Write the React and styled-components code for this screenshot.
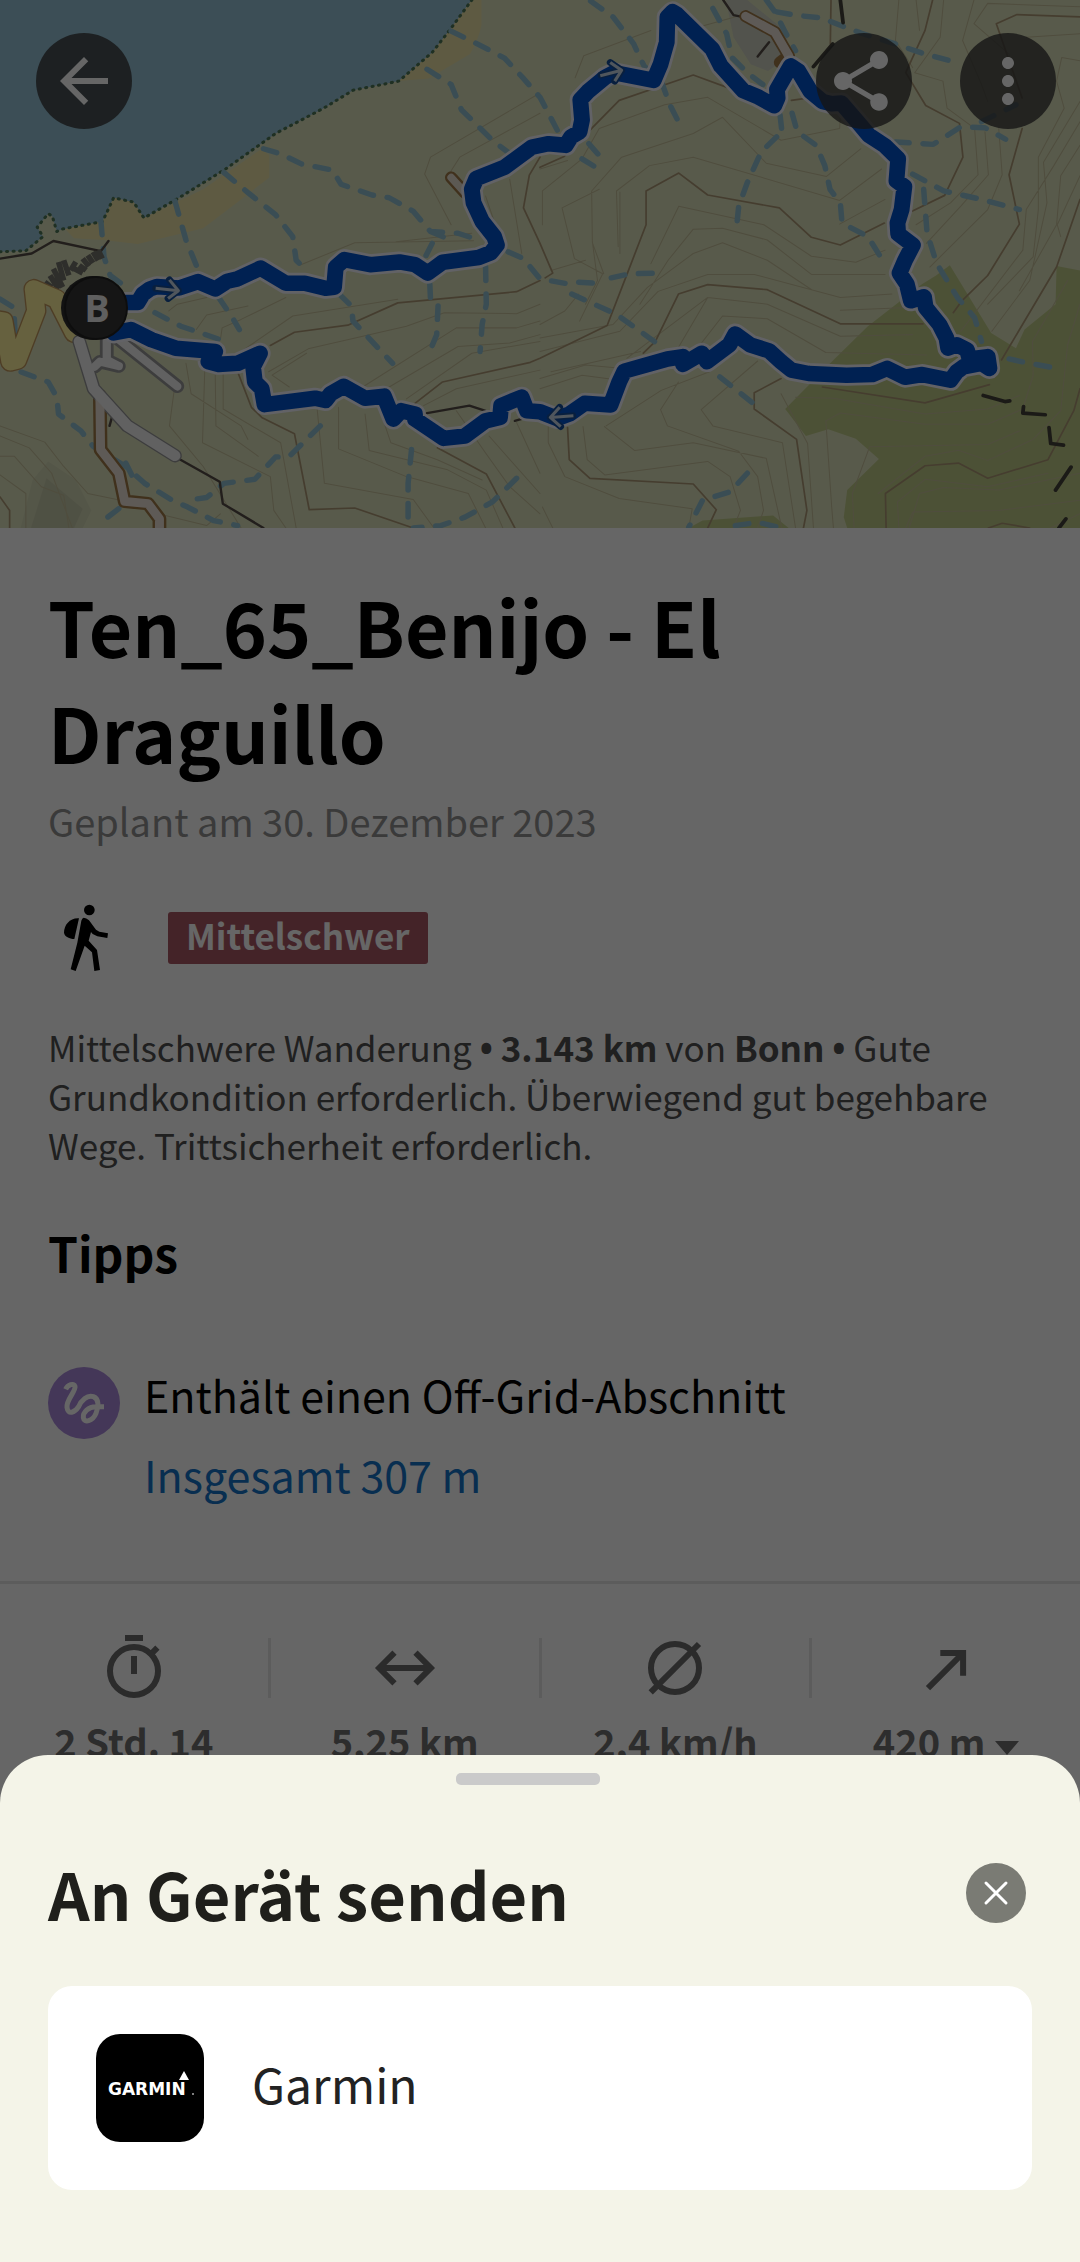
import { MdArrowBack, MdMoreVert, MdShare } from "react-icons/md";
import styled, { createGlobalStyle } from "styled-components";

export default function App() {
  return (
    <>
      <GlobalStyle />
      <Page>
        <Hero>
          <TourMap />
          <TopBar>
            <RoundButton aria-label="Zurück">
              <MdArrowBack />
            </RoundButton>
            <TopActions>
              <RoundButton aria-label="Teilen">
                <MdShare viewBox="1 0 24 24" />
              </RoundButton>
              <RoundButton aria-label="Mehr">
                <MdMoreVert />
              </RoundButton>
            </TopActions>
          </TopBar>
        </Hero>

        <Content>
          <Title>Ten_65_Benijo - El Draguillo</Title>
          <Planned>Geplant am 30. Dezember 2023</Planned>
          <Grade>
            <HikerIcon />
            <Badge>Mittelschwer</Badge>
          </Grade>
          <Description>
            Mittelschwere Wanderung <Bullet>•</Bullet> <b>3.143 km</b> von{" "}
            <b>Bonn</b> <Bullet>•</Bullet> Gute Grundkondition erforderlich.
            Überwiegend gut begehbare Wege. Trittsicherheit erforderlich.
          </Description>
          <Subtitle>Tipps</Subtitle>
          <Tip>
            <OffGridIcon />
            <TipText>
              <span>Enthält einen Off-Grid-Abschnitt</span>
              <TipLink href="#offgrid">Insgesamt 307 m</TipLink>
            </TipText>
          </Tip>
        </Content>

        <Stats>
          <Stat>
            <StatIcon viewBox="0 0 24 24">
              <path d="M9 2h6M12 8v6M17.4 7.6l2.4-2.4" />
              <circle cx="12" cy="13" r="8" />
            </StatIcon>
            <StatValue>2 Std. 14</StatValue>
          </Stat>
          <Divider />
          <Stat>
            <StatIcon viewBox="0 0 24 24">
              <path d="M8.5 6.9L3.4 12l5.1 5.1M15.5 6.9l5.1 5.1-5.1 5.1M3.4 12h17.2" />
            </StatIcon>
            <StatValue>5,25 km</StatValue>
          </Stat>
          <Divider />
          <Stat>
            <StatIcon viewBox="0 0 24 24">
              <path d="M3.9 20.1L20 4" />
              <circle cx="12" cy="12" r="8" />
            </StatIcon>
            <StatValue>2,4 km/h</StatValue>
          </Stat>
          <Divider />
          <Stat>
            <StatIcon viewBox="0 0 24 24">
              <path d="M10.1 7h7.6v7.6M17.7 7L6 18.7" />
            </StatIcon>
            <StatValue>
              420 m
              <Caret viewBox="0 0 24 14">
                <path d="M0 0h24L12 14z" />
              </Caret>
            </StatValue>
          </Stat>
        </Stats>
      </Page>

      <Backdrop />

      <Sheet role="dialog" aria-labelledby="sheet-title">
        <HandleRow>
          <Handle />
        </HandleRow>
        <SheetHeader>
          <SheetTitle id="sheet-title">An Gerät senden</SheetTitle>
          <CloseButton aria-label="Schließen">
            <svg viewBox="0 0 60 60">
              <path d="M20 20l20 20M40 20L20 40" />
            </svg>
          </CloseButton>
        </SheetHeader>
        <Device>
          <GarminLogo />
          <DeviceName>Garmin</DeviceName>
        </Device>
      </Sheet>
    </>
  );
}

function HikerIcon() {
  return (
    <Hiker viewBox="24 36 216 216">
      <circle cx="148" cy="60" r="16" />
      <path d="M117 85C90 83 72 105 72 128C74 140 88 146 103 147Z" />
      <path d="M131 83Q139 83 147 91L168 119L178 125L204 130L202 144L172 139L158 132L153 126L146 152L171 180L180 240L163 243L156 187L134 167L107 243L92 238L112 158L124 92Q126 84 131 83Z" />
    </Hiker>
  );
}

function OffGridIcon() {
  return (
    <TipIcon viewBox="54 51 216 216">
      <circle cx="162" cy="159" r="108" fill="#aa8adc" />
      <path
        d="M107 118C113 104 132 98 135 109C138 124 108 150 111 172C114 196 134 188 146 170C154 150 172 134 190 140C208 147 206 170 198 190C188 214 162 220 160 203C158 186 176 170 197 170H222"
        fill="none"
        stroke="#fff"
        strokeWidth="15"
      />
    </TipIcon>
  );
}

function GarminLogo() {
  return (
    <Logo viewBox="0 0 108 108">
      <rect width="108" height="108" rx="24" />
      <path d="M88 37l5 9H83z" fill="#fff" />
      <text x="12" y="61" fill="#fff">
        GARMIN
      </text>
      <circle cx="97" cy="60" r="1" fill="#aaa" />
    </Logo>
  );
}

const route =
  "M300 915L365 895L400 895L415 870L435 855L455 848L520 852L575 833L625 855L660 832L690 825L757 793L830 838L885 838L945 853L970 850L975 790L1000 768L1075 783L1160 775L1205 783L1242 808L1285 776L1390 762L1425 748L1443 725L1435 700L1400 655L1375 600L1370 560L1383 528L1465 495L1545 435L1593 425L1643 430L1658 405L1683 390L1690 355L1685 295L1708 270L1758 228L1783 215L1898 238L1918 190L1936 125L1938 50L1953 35L1965 42L2068 145L2093 195L2158 268L2198 285L2248 313L2258 290L2256 265L2296 195L2318 210L2353 270L2388 300L2415 307L2443 305L2498 370L2523 400L2568 430L2608 470L2603 535L2626 552L2618 620L2606 660L2608 692L2651 725L2628 770L2612 808L2633 840L2645 890L2683 878L2688 910L2728 960L2748 1000L2753 1030L2778 1020L2808 1035L2815 1062L2868 1055L2873 1090L2850 1075L2798 1085L2778 1100L2760 1125L2678 1108L2628 1116L2576 1090L2533 1108L2458 1110L2348 1105L2298 1095L2268 1070L2233 1038L2178 1020L2135 988L2118 1020L2053 1070L2038 1045L1983 1078L1983 1055L1938 1062L1813 1098L1798 1130L1773 1198L1698 1193L1653 1225L1618 1238L1568 1218L1530 1215L1515 1175L1455 1200L1452 1235L1410 1245L1350 1290L1288 1297L1205 1240L1205 1225L1165 1215L1142 1240L1115 1172L1060 1178L998 1143L960 1165L945 1185L915 1178L768 1197L760 1150L740 1130L735 1085L755 1045L690 1075L635 1078L605 1070L625 1040L510 1030L440 1005L380 975L330 985";

const streams = [
  "M1310 92L1390 132L1465 172L1520 232L1568 288L1590 330L1618 385",
  "M1240 205L1310 250L1340 325L1430 415L1500 470",
  "M765 440L815 455L875 485L965 503L990 545L1080 577L1130 585L1200 625L1250 685L1330 690L1375 705",
  "M650 510L720 570L800 635L850 700L860 770L890 800",
  "M508 595L540 710L572 790",
  "M293 655L302 760L320 815L380 860",
  "M450 925L525 965L640 1005",
  "M635 880L675 940L695 975",
  "M985 870L1020 905L1025 950L1080 1010L1140 1075",
  "M1255 720L1235 760M1248 840L1250 885M1272 905L1268 990L1252 1030",
  "M1410 790L1412 900L1400 960L1394 1040",
  "M1250 685L1320 715M1475 745L1520 765L1568 825L1650 840L1680 835L1730 838",
  "M1660 870L1790 930L1920 1025",
  "M1775 822L1830 810L1905 808",
  "M0 885L40 910L45 1010L60 1100L140 1130L165 1175L170 1225L235 1275L270 1320L365 1380L420 1430L500 1480L545 1500L620 1540L690 1555",
  "M930 1260L840 1350L800 1352L740 1418L650 1430L600 1472L545 1480",
  "M1195 1330L1185 1430L1185 1562",
  "M1500 1415L1430 1485L1350 1530L1280 1555L1200 1562",
  "M345 1505L300 1540M365 1370L385 1410",
  "M1715 3L1780 50L1840 130L1870 195L1920 240L1945 310L1975 370",
  "M2070 25L2110 100L2125 170L2170 215L2215 250",
  "M2225 0L2250 35L2280 95L2310 150",
  "M2255 35L2310 45L2385 53L2440 75L2500 98L2600 130L2680 158L2760 180",
  "M2300 335L2315 390L2370 430L2395 490L2410 560L2440 600L2445 660L2520 700L2560 765",
  "M2255 405L2210 450L2170 540L2145 610L2138 680",
  "M2265 340L2270 385M1710 425L1740 460M1690 470L1730 495",
  "M2600 420L2710 427L2790 375L2860 378L2920 412M2850 360L2950 310",
  "M2650 515L2740 565L2850 590L2960 620",
  "M2682 560L2692 690L2720 780L2780 880L2830 940L2850 1010",
  "M2930 1062L2990 1075L3060 1088",
  "M2090 1115L2140 1155L2195 1200",
  "M2170 1400L2120 1455L2040 1480L2000 1560M2135 1555L2200 1545L2260 1560",
];

const boldContours =
  "M785 1022L855 983L1010 962L1155 896L1500 863L1568 830M692 1105L730 1205L760 1235L855 1283L898 1508L1030 1503L1200 1562M1190 1205L1285 1130L1540 1072L1568 1060L1763 963L1823 805L1876 665V565L1971 512L2055 577L2263 615L2356 702L2440 725L2568 660M1270 1325L1412 1402L1495 1562M1568 495L1638 463L1718 380L1798 297L2013 222L2115 260M2298 297L2360 288M1568 465L1537 518L1520 615L1568 720L1605 808L1583 822M2708 0L2686 90L2630 215L2688 312L2786 365L2796 465L2743 578L2648 625M3136 50L2953 43L2893 70L2968 290M2968 380L2930 517L2960 663L2868 815L2793 890L2768 925M1868 1045L1903 1010L1970 870L2055 842L2228 857L2440 958H2680M3136 590L3068 790L2908 1065M1648 1265L1653 1360L1713 1415L2013 1432L2080 1508L2055 1562M2268 1120L2190 1162V1210L2313 1300L2343 1510L2333 1562M2388 1145L2686 1192L2873 1138M2573 1562L2571 1460L2686 1378L2783 1370L2868 1415L3043 1360L3118 1215L3136 1150M0 1470L28 1510V1562M2413 0L2411 130M2870 1562L2910 1548L2990 1562";

const thinContours =
  "M490 920L515 900L600 880M570 975L600 932L720 905M640 1005L645 970L700 945L830 880M700 1040L850 935L1155 885M780 1100L895 1032L1180 965L1290 925L1500 928L1568 900M840 1145L790 1110L890 1045M1045 1150L1325 970H1500L1568 950M1130 1145L1330 1025L1480 1015L1568 990M1180 1180L1370 1045L1568 1010M1230 1200L1325 1150L1568 1095M540 1075L555 1165L700 1260L720 1300M505 1160L492 1260L590 1380L700 1562M595 1080L588 1310L785 1410L795 1510L830 1562M648 1100V1210L815 1310L860 1562M625 1110L627 1260L750 1350M920 1200L942 1430L1200 1478L1260 1562M983 1205V1328L1180 1410L1360 1460L1410 1562M1060 1225L1072 1333L1300 1390L1412 1450L1460 1562M1110 1235L1135 1310L1270 1360L1400 1420M1325 1215L1410 1340L1480 1440L1568 1520M1500 1250L1568 1400M1420 1290L1568 1460M0 1260L130 1308L185 1380L255 1460L350 1480M0 1290L85 1325L150 1400L210 1562M0 1350H42L120 1440L185 1465L200 1562M0 1405L75 1460V1562M480 1525L600 1555L640 1520M1375 712L1030 718L870 785M1310 665L1233 515L1250 465L1568 275M1310 505L1335 465L1568 335M1410 580L1450 700M1480 530L1515 750M1370 690L1150 715M1605 1562L1575 1500M1670 230L1695 165L1890 90M1940 70L2040 77L2170 40M1568 500L1648 475M1575 665V565L1690 470L1740 380L1930 310L2055 288L2268 415L2438 380L2440 345M1600 800L1700 770M1700 900L1735 830L1720 715L1718 565L1805 465L2013 395L2098 347L2225 483L2400 522L2500 440M1683 950L1750 810L1668 765L1632 615L1740 560M1753 810L1720 718M1790 565L1886 490L2013 465L2438 593L2560 500M1568 960L1640 920L1680 870M1795 730L1790 565M1800 750V568M1890 780L1971 610L2218 665L2356 758L2485 776L2570 740M1858 900L1940 770L2013 678L2098 675L2228 710L2356 812H2570M1568 1000L1780 960L1880 850L2013 750L2098 718L2228 770L2358 858M1568 1040L1800 980L1911 862L2055 812H2190L2440 880L2590 870M1820 1060L2055 880L2228 900L2440 995L2650 990M1960 1045L2055 880M2010 1050L2098 935L2228 943L2398 1043L2690 1050M1600 1100L1860 1040M1568 1120L1700 1080L1810 1090M1568 1150L1690 1110L1800 1125M2440 918L2640 910M2438 663L2570 590M1592 1262V1310L1640 1410L1798 1475L2010 1505L2000 1562M1693 1262L1705 1360L1756 1405L2055 1365L2120 1410L2150 1510L2130 1562M1755 1262L1843 1333L2013 1310L2225 1356L2270 1562M2200 1068L2036 1212L2070 1260L2272 1310L2310 1562M1760 1260L1920 1155L2060 1100M1918 1212L1938 1260L2145 1335L2200 1410L2217 1510L2200 1562M1970 1130L1918 1212M2268 1165L2345 1312L2362 1562M2310 1175L2420 1178L2686 1225L2868 1210L2960 1170M2420 1562L2415 1500L2398 1245L2440 1222L2686 1255H2868L2970 1210L3000 1110L2998 1010L3100 830M2480 1562L2475 1460L2525 1322L2868 1315L2960 1275M2610 1562L2606 1485L2686 1418L2868 1440L3043 1400M2640 1562L2670 1460L2740 1442L2900 1450L3136 1400M2550 1460L2686 1350L2783 1332L2868 1362L3000 1300L3080 1215L3100 1020L3136 900M2630 1562L2650 1515L2900 1510L3136 1480M3050 1562L3136 1520M2610 0L2600 120L2650 200M2660 0L2670 90M2740 0L2730 110L2656 215L2738 240L2750 320L2830 380L2840 517L2760 600L2660 665M2828 0L2795 120L2850 250L2868 300M3136 20L2868 10L2828 70L2930 160L2940 250M3136 100L2980 110M3136 180L3083 170L3068 240L3090 320L3015 465V620L3000 760L2868 900M2900 380L2910 517L2868 620L2700 790M2860 390L2870 517L2790 610L2690 720M3136 300L3030 480L3040 600L2990 830L2880 980M3136 360L3060 490L2980 620L2970 740L2790 980M3136 430L3080 520L3068 665L2960 860M3136 520L3070 665L3080 700";

// the terrain is drawn on a finer grid and scaled down to the map's own units
function TourMap() {
  return (
    <MapSvg viewBox="0 0 1080 528" preserveAspectRatio="xMidYMid slice">
      <rect width="1080" height="528" fill="#dce1bc" />
      <g
        transform="scale(0.34439 0.33801)"
        fill="none"
        strokeLinecap="round"
        strokeLinejoin="round"
      >
        <g stroke="none">
          <path
            d="M0 0H1370L1305 90L1255 155L1158 240L1025 267L940 320L800 395L655 500L520 585L418 645L388 598L330 585L298 655L180 678L165 685L152 640L140 632L108 672L125 700L75 742L0 745Z"
            fill="#96c3d7"
          />
          <path
            d="M1370 0H1398V75Q1390 115 1365 160L1245 232L1158 240L1255 155L1305 90Z"
            fill="#ebe1a5"
          />
          <path
            d="M760 440L782 460V525L700 590L590 675L400 722L300 710L215 705L190 678L298 655L330 585L388 598L418 645L590 560Z"
            fill="#ebe1a5"
          />
          <path
            d="M2758 785L2718 815L2678 840L2590 910L2520 965L2415 1070L2348 1140L2280 1210L2340 1290L2405 1270L2485 1298L2552 1358L2460 1450L2450 1530L2460 1562H3136V800L3068 787L3065 900L2975 975L2950 1030L2878 985Z"
            fill="#bfcb87"
          />
          <path
            d="M2000 1562L2040 1540L2245 1525L2290 1562Z"
            fill="#bfcb87"
          />
          <path
            d="M2108 0H2170L2290 100L2265 185L2230 210L2180 190L2130 110Z"
            fill="#cdcfc0"
          />
          <path
            d="M60 1562L95 1420L140 1365L220 1420L265 1510L240 1562Z"
            fill="#d2d6b4"
          />
          <path d="M90 1562L135 1415L240 1505L215 1562Z" fill="#c6caaa" />
        </g>

        <path d={thinContours} stroke="#c6c09b" strokeWidth="3" />
        <path d={boldContours} stroke="#ad9976" strokeWidth="5" />

        <path
          d="M0 745L75 742L125 700L108 672L140 632L152 640L165 685L180 678L298 655L330 585L388 598L418 645L520 585L655 500L800 395L940 320L1025 267L1158 240L1255 155L1305 90L1370 0"
          stroke="#4f7858"
          strokeWidth="9"
          strokeDasharray="3 16"
        />

        <path
          d={streams.join("")}
          stroke="#91c0d2"
          strokeWidth="16"
          strokeDasharray="40 40"
        />

        <g stroke="#554d46" strokeWidth="7">
          <path d="M0 765L92 750L155 713L293 743L315 713" />
          <path d="M515 1355L638 1425L647 1490L765 1562M325 1235L318 1260" />
          <path d="M1240 1222L1363 1200L1430 1222M1495 1245L1530 1235" />
          <path d="M2100 0L2130 45L2155 50M2233 125L2200 167" />
        </g>
        <g stroke="#45433a" strokeWidth="11">
          <path d="M2440 0L2448 67M2418 130L2362 197" />
          <path d="M2855 1170L2918 1188L2932 1186M2972 1203L2970 1222L3035 1227M3046 1265L3051 1312L3088 1317M3110 1382L3065 1450M3095 1535L3075 1562" />
        </g>

        <path
          d="M130 835L150 850M145 815L170 855M155 795L182 850M170 775L185 830M185 770L200 815M205 800L220 775M215 795L240 808M230 785L250 800M240 765L258 788M255 755L270 778M270 745L285 770M285 740L297 765"
          stroke="#74746b"
          strokeWidth="16"
          strokeLinecap="butt"
        />

        <path
          d="M-20 945L10 950L30 1070L50 1065L105 920L98 855L165 885L215 985"
          stroke="#c39a5e"
          strokeWidth="60"
        />
        <path
          d="M-20 945L10 950L30 1070L50 1065L105 920L98 855L165 885L215 985"
          stroke="#fff29e"
          strokeWidth="52"
        />

        <path
          d="M290 1170L292 1330L345 1400L362 1483L430 1490L463 1535V1580"
          stroke="#a07a48"
          strokeWidth="40"
        />
        <path
          d="M2165 48L2250 95L2290 165L2265 185M1310 525L1350 570"
          stroke="#a07a48"
          strokeWidth="36"
        />
        <path
          d="M230 1010L272 1150L370 1260L508 1348M310 1000V1065L345 1083M275 1085L290 1070L345 1083M340 1000L515 1143"
          stroke="#98989a"
          strokeWidth="40"
        />
        <path
          d="M290 1170L292 1330L345 1400L362 1483L430 1490L463 1535V1580M2165 48L2250 95L2290 165"
          stroke="#ece2d8"
          strokeWidth="26"
        />
        <path d="M1310 525L1350 570" stroke="#e6ded0" strokeWidth="22" />
        <path
          d="M310 1000V1065L345 1083M275 1085L290 1070L345 1083M340 1000L515 1143"
          stroke="#f2f2f2"
          strokeWidth="24"
        />
        <path
          d="M230 1010L272 1150L370 1260L508 1348"
          stroke="#f2f2f2"
          strokeWidth="32"
        />

        <path d={route} stroke="#f4f4ff" strokeWidth="62" />
        <path d={route} stroke="#0053cd" strokeWidth="46" />

        <g stroke="#164f9c" strokeWidth="20">
          <path d="M452 853L518 860M492 828L518 860L488 883" />
          <path d="M1745 222L1805 208M1772 185L1805 208L1785 240" />
          <path d="M1663 1230L1598 1235M1625 1205L1598 1235L1628 1262" />
        </g>
        <g stroke="#c8d6e6" strokeWidth="9" strokeLinecap="butt">
          <path d="M452 853L518 860M492 828L518 860L488 883" />
          <path d="M1743 224L1805 208M1772 185L1805 208L1785 240" />
          <path d="M1665 1230L1598 1235M1625 1205L1598 1235L1628 1262" />
        </g>
      </g>
      <circle cx="93" cy="308" r="32" fill="#2d2d2d" />
      <circle cx="96" cy="308" r="31" fill="#363636" stroke="#222" strokeWidth="2" />
      <text x="97" y="322" textAnchor="middle" fill="#eee">
        B
      </text>
    </MapSvg>
  );
}

const GlobalStyle = createGlobalStyle`
  * {
    box-sizing: border-box;
  }

  body {
    margin: 0;
    background: #fff;
    color: #000;
    font-family: "Noto Sans CJK SC", "Noto Sans", sans-serif;
  }

  button {
    border: 0;
    padding: 0;
    font: inherit;
    cursor: pointer;
  }
`;

const Page = styled.main`
  height: 100vh;
  overflow: hidden;
`;

const Hero = styled.header`
  position: relative;
  height: 528px;
`;

const MapSvg = styled.svg`
  display: block;
  width: 100%;
  height: 100%;

  text {
    font-family: "Open Sans", sans-serif;
    font-size: 38px;
    font-weight: 700;
  }
`;

const TopBar = styled.nav`
  position: absolute;
  top: 0;
  left: 0;
  right: 0;
  display: flex;
  justify-content: space-between;
  padding: 33px 24px 0 36px;
`;

const TopActions = styled.div`
  display: flex;
  gap: 48px;
`;

const RoundButton = styled.button`
  display: flex;
  align-items: center;
  justify-content: center;
  width: 96px;
  height: 96px;
  border-radius: 50%;
  background: rgba(54, 54, 54, 0.8);
  color: #fff;

  svg {
    width: 72px;
    height: 72px;
  }
`;

const Content = styled.section`
  padding: 45px 48px 80px;
`;

const Title = styled.h1`
  margin: 0;
  font-size: 75px;
  line-height: 106px;
  font-weight: 700;
`;

const Planned = styled.p`
  margin: 9px 0 0;
  font-size: 38px;
  line-height: 54px;
  color: #919191;
`;

const Grade = styled.div`
  display: flex;
  align-items: center;
  gap: 48px;
  margin-top: 54px;
`;

const Hiker = styled.svg`
  width: 72px;
  height: 72px;
`;

const Badge = styled.span`
  padding: 0 18px 6px;
  border-radius: 3px;
  background: #aa5864;
  color: #fff;
  font-size: 35px;
  line-height: 46px;
  font-weight: 700;
`;

const Description = styled.p`
  margin: 48px 0 0;
  font-size: 35px;
  line-height: 49px;
  color: #505050;
`;

const Bullet = styled.b`
  font-family: "Open Sans", sans-serif;
  line-height: 1;
`;

const Subtitle = styled.h2`
  margin: 48px 0 0;
  font-size: 48px;
  line-height: 70px;
  font-weight: 700;
`;

const Tip = styled.div`
  display: flex;
  gap: 24px;
  margin-top: 80px;
`;

const TipIcon = styled.svg`
  flex: none;
  width: 72px;
  height: 72px;
`;

const TipText = styled.div`
  display: flex;
  flex-direction: column;
  align-items: flex-start;
  gap: 26px;
  font-size: 43px;
  line-height: 54px;
`;

const TipLink = styled.a`
  color: #1473c8;
  text-decoration: none;
`;

const Stats = styled.section`
  display: flex;
  padding-top: 48px;
  border-top: 3px solid #e6e6e6;
`;

const Stat = styled.div`
  flex: 1;
  display: flex;
  flex-direction: column;
  align-items: center;
  gap: 10px;
`;

const Divider = styled.div`
  width: 3px;
  height: 60px;
  margin-top: 6px;
  background: #e6e6e6;
`;

const StatIcon = styled.svg`
  width: 72px;
  height: 72px;
  fill: none;
  stroke: #6b6b6b;
  stroke-width: 2;
`;

const StatValue = styled.div`
  display: flex;
  align-items: center;
  gap: 10px;
  color: #707070;
  font-size: 38px;
  line-height: 54px;
  font-weight: 700;
`;

const Caret = styled.svg`
  width: 24px;
  height: 14px;
  margin-top: 14px;
  fill: #707070;
`;

const Backdrop = styled.div`
  position: fixed;
  inset: 0;
  background: rgba(0, 0, 0, 0.6);
`;

const Sheet = styled.section`
  position: fixed;
  left: 0;
  right: 0;
  bottom: 0;
  padding: 18px 48px 72px;
  border-radius: 48px 48px 0 0;
  background: #f4f4e8;
`;

const HandleRow = styled.div`
  display: flex;
  justify-content: center;
  padding-right: 24px;
`;

const Handle = styled.div`
  width: 144px;
  height: 12px;
  border-radius: 5px;
  background: #cacaca;
`;

const SheetHeader = styled.div`
  display: flex;
  align-items: center;
  justify-content: space-between;
  margin-top: 63px;
  padding-right: 6px;
`;

const SheetTitle = styled.h2`
  margin: 0;
  color: #1f1f1b;
  font-size: 65px;
  line-height: 90px;
  font-weight: 700;
`;

const CloseButton = styled.button`
  width: 60px;
  height: 60px;
  border-radius: 50%;
  background: #7a7b74;

  svg {
    display: block;
    fill: none;
    stroke: #fff;
    stroke-width: 3;
    stroke-linecap: round;
  }
`;

const Device = styled.button`
  display: flex;
  align-items: center;
  gap: 48px;
  width: 100%;
  margin-top: 48px;
  padding: 48px;
  border-radius: 24px;
  background: #fff;
  color: #222;
`;

const DeviceName = styled.span`
  padding-bottom: 10px;
  font-size: 48px;
  line-height: 60px;
`;

const Logo = styled.svg`
  width: 108px;
  height: 108px;

  text {
    font-family: "DejaVu Sans", sans-serif;
    font-size: 17px;
    font-weight: 700;
  }
`;
